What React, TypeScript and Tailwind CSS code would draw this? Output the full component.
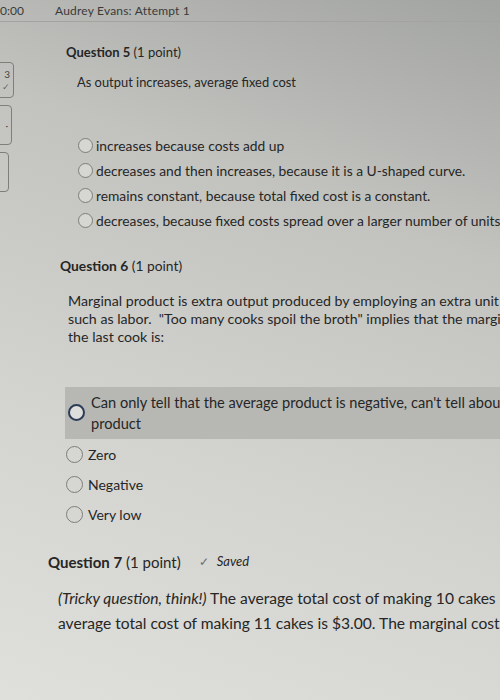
import React from "react";

const font = { fontFamily: "Lato, 'Open Sans', sans-serif" };

function Radio({ size = 15, active = false }: { size?: number; active?: boolean }) {
  return (
    <span
      className={
        active
          ? "shrink-0 rounded-full border-2 border-[#2c3b57] bg-[#dedfdc]"
          : "shrink-0 rounded-full border border-[#7c7e7b] bg-[#d6d7d3]"
      }
      style={{ width: size, height: size }}
    />
  );
}

function Line({ children, className = "" }: { children: React.ReactNode; className?: string }) {
  return <div className={"whitespace-nowrap " + className}>{children}</div>;
}

export default function App() {
  const q5 = [
    "increases because costs add up",
    "decreases and then increases, because it is a U-shaped curve.",
    "remains constant, because total fixed cost is a constant.",
    "decreases, because fixed costs spread over a larger number of units",
  ];

  return (
    <div
      className="relative w-[500px] h-[700px] overflow-hidden bg-[linear-gradient(200deg,#a2a4a1_0%,#c2c3bf_30%,#d3d3cf_65%,#dfdfdb_100%)] text-[#262626]"
      style={font}
    >
      {/* top bar */}
      <div className="flex h-[22px] items-center border-b border-[#a3a4a1] text-[12px] text-[#3a3a3a]">
        <span className="ml-[-7px] w-[62px]">00:00</span>
        <span className="tracking-[0.2px]">Audrey Evans: Attempt 1</span>
      </div>

      <div className="flex">
        {/* left rail */}
        <div className="flex w-[20px] shrink-0 flex-col gap-[7px] pt-[40px]">
          <div className="ml-[-4px] flex h-[36px] w-[18px] flex-col items-end justify-center gap-[3px] rounded-[4px] border border-[#7d7f7c] pr-[3px] text-[10px] leading-none text-[#444]">
            <span>3</span>
            <span className="text-[9px] text-[#666]">✓</span>
          </div>
          <div className="ml-[-4px] flex h-[40px] w-[16px] items-center justify-end rounded-[4px] border border-[#7d7f7c] pr-[3px] text-[10px] text-[#444]">
            ·
          </div>
          <div className="ml-[-4px] h-[40px] w-[13px] rounded-[4px] border border-[#7d7f7c]" />
        </div>

        <div className="min-w-0 flex-1 overflow-hidden">
          {/* Question 5 */}
          <div className="pl-[46px] pt-[21px] text-[13px]">
            <span className="font-bold">Question 5</span> (1 point)
          </div>
          <div className="pl-[57px] pt-[10px] text-[12.9px]">As output increases, average fixed cost</div>
          <div className="flex flex-col gap-[7px] pl-[58px] pt-[45px] text-[13.8px]">
            {q5.map((t) => (
              <div key={t} className="flex h-[18px] items-center gap-[3px] whitespace-nowrap">
                <Radio size={15} />
                <span>{t}</span>
              </div>
            ))}
          </div>

          {/* Question 6 */}
          <div className="pl-[40px] pt-[26px] text-[13.8px]">
            <span className="font-bold">Question 6</span> (1 point)
          </div>
          <div className="pl-[48px] pt-[15px] text-[14.2px] leading-[18px]">
            <Line>Marginal product is extra output produced by employing an extra unit of an input</Line>
            <Line>such as labor. &nbsp;"Too many cooks spoil the broth" implies that the marginal product of</Line>
            <Line>the last cook is:</Line>
          </div>

          <div className="ml-[45px] mt-[41px] flex items-center gap-[6px] bg-[#b7b8b4] py-[5px] pl-[3px] text-[14.6px] leading-[21px]">
            <Radio size={17} active />
            <div>
              <Line>Can only tell that the average product is negative, can't tell about the marginal</Line>
              <Line>product</Line>
            </div>
          </div>
          <div className="flex flex-col gap-[12px] pl-[46px] pt-[7px] text-[14px]">
            {["Zero", "Negative", "Very low"].map((t) => (
              <div key={t} className="flex h-[18px] items-center gap-[5px]">
                <Radio size={17} />
                <span>{t}</span>
              </div>
            ))}
          </div>

          {/* Question 7 */}
          <div className="flex items-center pl-[28px] pt-[27px] text-[15px]">
            <span className="font-bold">Question 7</span>
            <span>&nbsp;(1 point)</span>
            <span className="ml-[18px] text-[12px] text-[#6d6e6b]">✓</span>
            <span className="ml-[8px] text-[13px] italic">Saved</span>
          </div>
          <div className="pl-[38px] pt-[13px] text-[15.6px] leading-[25px]">
            <Line>
              <span className="italic">(Tricky question, think!)</span> The average total cost of making 10 cakes is
            </Line>
            <Line>average total cost of making 11 cakes is $3.00. The marginal cost of the</Line>
          </div>
        </div>
      </div>
    </div>
  );
}
